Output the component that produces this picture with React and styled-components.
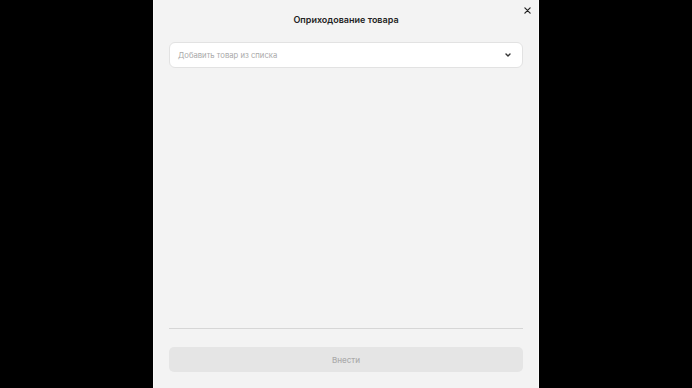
import React from 'react'
import styled, { createGlobalStyle } from 'styled-components'

const GlobalStyle = createGlobalStyle`
  html, body {
    margin: 0;
    padding: 0;
    background: #000;
    font-family: Inter, "Liberation Sans", sans-serif;
  }
  #root {
    height: 388px;
  }
`;

const Overlay = styled.div`
  width: 692px;
  height: 388px;
  display: flex;
  justify-content: center;
`;

const Modal = styled.div`
  width: 386px;
  height: 388px;
  box-sizing: border-box;
  background: #f3f3f3;
  border-left: 1px solid #fafafa;
  border-right: 1px solid #fafafa;
  padding: 13px 15px 16px 15px;
  display: flex;
  flex-direction: column;
  position: relative;
`;

const Title = styled.div`
  text-align: center;
  font-size: 9px;
  font-weight: 600;
  color: #232323;
  line-height: 13px;
`;

const CloseButton = styled.button`
  position: absolute;
  top: 4px;
  right: 5px;
  width: 12px;
  height: 12px;
  padding: 0;
  border: 0;
  background: none;
  display: flex;
  align-items: center;
  justify-content: center;
  cursor: pointer;
`;

const Select = styled.div`
  margin-top: 16px;
  height: 26px;
  box-sizing: border-box;
  background: #fff;
  border: 1px solid #e2e2e2;
  border-radius: 6px;
  display: flex;
  align-items: center;
  justify-content: space-between;
  padding: 0 11px 0 8px;
`;

const Placeholder = styled.span`
  font-size: 7.7px;
  color: #a9a9a9;
`;

const Content = styled.div`
  flex: 1;
`;

const Divider = styled.div`
  height: 1px;
  background: #d6d6d6;
`;

const SubmitButton = styled.button`
  margin-top: 18px;
  height: 25px;
  border: 0;
  border-radius: 5px;
  background: #e5e5e5;
  color: #ababab;
  font-family: inherit;
  font-size: 8px;
  font-weight: 500;
`;

function App() {
  return (
    <>
      <GlobalStyle />
      <Overlay>
        <Modal>
          <CloseButton>
            <svg width="7" height="7" viewBox="0 0 8 8">
              <path d="M1 1L7 7M7 1L1 7" stroke="#222" strokeWidth="1.4" strokeLinecap="round" />
            </svg>
          </CloseButton>
          <Title>Оприходование товара</Title>
          <Select>
            <Placeholder>Добавить товар из списка</Placeholder>
            <svg width="6" height="4" viewBox="0 0 6 4">
              <path d="M1 1L3 3L5 1" stroke="#333" strokeWidth="1.4" fill="none" strokeLinecap="round" strokeLinejoin="round" />
            </svg>
          </Select>
          <Content />
          <Divider />
          <SubmitButton>Внести</SubmitButton>
        </Modal>
      </Overlay>
    </>
  )
}

export default App
